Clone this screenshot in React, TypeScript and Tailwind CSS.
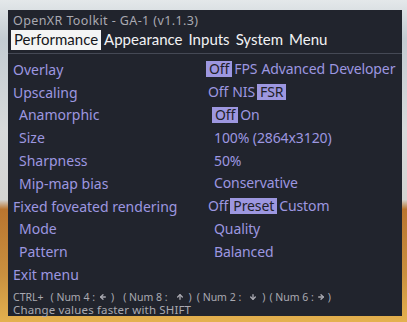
import { ArrowDown, ArrowLeft, ArrowRight, ArrowUp } from "lucide-react";

const font = "font-['Noto_Sans','DejaVu_Sans',sans-serif]";

type Row = {
  label: string;
  sub?: boolean;
  values?: { text: string; on?: boolean }[];
};

const rows: Row[] = [
  {
    label: "Overlay",
    values: [
      { text: "Off", on: true },
      { text: "FPS" },
      { text: "Advanced" },
      { text: "Developer" },
    ],
  },
  {
    label: "Upscaling",
    values: [{ text: "Off" }, { text: "NIS" }, { text: "FSR", on: true }],
  },
  { label: "Anamorphic", sub: true, values: [{ text: "Off", on: true }, { text: "On" }] },
  { label: "Size", sub: true, values: [{ text: "100% (2864x3120)" }] },
  { label: "Sharpness", sub: true, values: [{ text: "50%" }] },
  { label: "Mip-map bias", sub: true, values: [{ text: "Conservative" }] },
  {
    label: "Fixed foveated rendering",
    values: [{ text: "Off" }, { text: "Preset", on: true }, { text: "Custom" }],
  },
  { label: "Mode", sub: true, values: [{ text: "Quality" }] },
  { label: "Pattern", sub: true, values: [{ text: "Balanced" }] },
  { label: "Exit menu" },
];

const tabs = ["Performance", "Appearance", "Inputs", "System", "Menu"];

const keys = [
  { n: "4", Icon: ArrowLeft, lead: "ml-[7px]", pre: "ml-[4px]", post: "ml-[4px]" },
  { n: "8", Icon: ArrowUp, lead: "ml-[9px]", pre: "ml-[8px]", post: "ml-[5px]" },
  { n: "2", Icon: ArrowDown, lead: "ml-[5px]", pre: "ml-[8px]", post: "ml-[5px]" },
  { n: "6", Icon: ArrowRight, lead: "ml-[4px]", pre: "ml-[3px]", post: "ml-[3px]" },
];

export default function App() {
  return (
    <div
      className={`${font} w-[407px] h-[322px] overflow-hidden pl-[8px] pt-[10px] bg-[linear-gradient(to_bottom,#e4e8ea_0%,#c3ccd2_12%,#d8dadb_40%,#d4d4d2_62%,#b9752f_65%,#c9903f_85%,#e4b14f_100%)]`}
    >
      <div className="w-[394px] h-[306px] bg-[#21242d] text-[#9d97e0] flex flex-col">
        <div className="pl-[5px] pt-[3px] h-[20px] text-[12.5px] tracking-[0.4px] leading-[16px] text-[#a9a9b1]">
          OpenXR Toolkit - GA-1 (v1.1.3)
        </div>
        <div className="flex pl-[3px] h-[20px] font-['Lato',sans-serif] text-[15px] leading-[19px] text-[#f2f2f4]">
          {tabs.map((t, i) => (
            <span
              key={t}
              className={
                i === 0
                  ? "px-[3px] bg-[#f4f4f4] text-[#15161a]"
                  : "px-[3px]"
              }
            >
              {t}
            </span>
          ))}
        </div>
        <div className="mt-[3px] h-px bg-[#454955]" />
        <div className="mt-[4px] flex flex-col text-[14px]">
          {rows.map((r) => (
            <div
              key={r.label}
              className={`flex items-center h-[22.8px] ${r.sub ? "pl-[11px]" : "pl-[5px]"}`}
            >
              <span className="w-[193px] shrink-0">{r.label}</span>
              <div className="flex tracking-[-0.1px]">
                {r.values?.map((v) => (
                  <span
                    key={v.text}
                    className={`leading-[16px] ${v.on ? "px-[3px] bg-[#9d97e0] text-[#1f2129]" : "px-[2px]"}`}
                  >
                    {v.text}
                  </span>
                ))}
              </div>
            </div>
          ))}
        </div>
        <div className="mt-[5px] pl-[5px] text-[#a9a9b1]">
          <div className="flex items-center h-[13px] text-[10.5px] leading-[13px] whitespace-pre">
            <span>CTRL+</span>
            {keys.map(({ n, Icon, lead, pre, post }) => (
              <span key={n} className={`${lead} flex items-center`}>
                <span>( Num {n} :</span>
                <Icon size={8} strokeWidth={4} className={pre} />
                <span className={post}>)</span>
              </span>
            ))}
          </div>
          <div className="h-[12px] text-[11.5px] leading-[12px] tracking-[0.15px]">
            Change values faster with SHIFT
          </div>
        </div>
      </div>
    </div>
  );
}
